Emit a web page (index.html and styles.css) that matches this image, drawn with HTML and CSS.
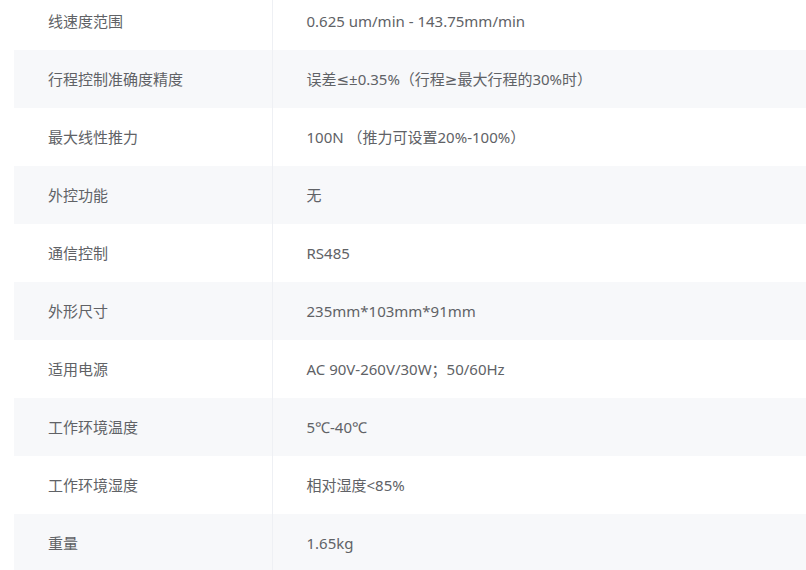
FILE: index.html
```html
<!DOCTYPE html>
<html lang="zh">
<head>
<meta charset="utf-8">
<link rel="stylesheet" href="styles.css">
</head>
<body>
<table class="spec">
<tbody>
<tr><td class="k">线速度范围</td><td class="v">0.625 um/min - 143.75mm/min</td></tr>
<tr><td class="k">行程控制准确度精度</td><td class="v">误差≤±0.35%（行程≥最大行程的30%时）</td></tr>
<tr><td class="k">最大线性推力</td><td class="v">100N （推力可设置20%-100%）</td></tr>
<tr><td class="k">外控功能</td><td class="v">无</td></tr>
<tr><td class="k">通信控制</td><td class="v">RS485</td></tr>
<tr><td class="k">外形尺寸</td><td class="v">235mm*103mm*91mm</td></tr>
<tr><td class="k">适用电源</td><td class="v">AC 90V-260V/30W；50/60Hz</td></tr>
<tr><td class="k">工作环境温度</td><td class="v">5℃-40℃</td></tr>
<tr><td class="k">工作环境湿度</td><td class="v">相对湿度&lt;85%</td></tr>
<tr><td class="k">重量</td><td class="v">1.65kg</td></tr>
</tbody>
</table>
</body>
</html>
```
FILE: styles.css
```css
html, body {
  margin: 0;
  padding: 0;
  background: #fff;
  overflow: hidden;
}
.spec {
  margin: -8px 0 0 14px;
  width: 792px;
  border-collapse: collapse;
  font-family: "Noto Sans", "DejaVu Sans", "Noto Sans CJK SC", sans-serif;
  font-size: 15px;
  color: #606266;
}
.spec td {
  height: 58px;
  padding: 0 0 0 34px;
  box-sizing: border-box;
  vertical-align: middle;
  line-height: 20px;
}
.spec tr:nth-child(even) td {
  background: #f7f8fa;
}
.spec .k {
  width: 258px;
  border-right: 1px solid #eef0f4;
}
```
